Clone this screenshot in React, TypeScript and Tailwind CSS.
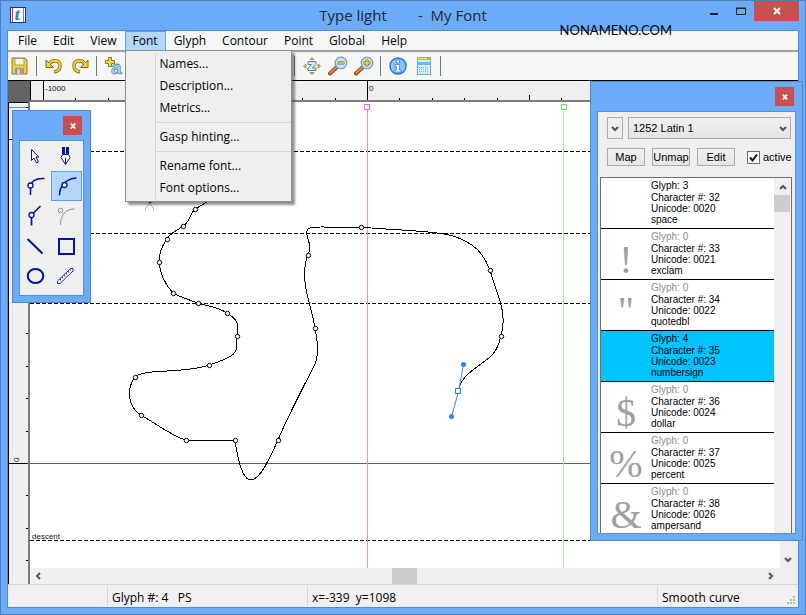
import { useState } from 'react';
import type { ReactNode } from 'react';
import clsx from 'clsx';

const NAVY = '#00149c';

const menus = ['File', 'Edit', 'View', 'Font', 'Glyph', 'Contour', 'Point', 'Global', 'Help'];

const fontMenu = [
  ['Names...', 'Description...', 'Metrics...'],
  ['Gasp hinting...'],
  ['Rename font...', 'Font options...'],
];

const glyphs = [
  { glyph: 3, char: 32, unicode: '0020', name: 'space', preview: '' },
  { glyph: 0, char: 33, unicode: '0021', name: 'exclam', preview: '!' },
  { glyph: 0, char: 34, unicode: '0022', name: 'quotedbl', preview: '"' },
  { glyph: 4, char: 35, unicode: '0023', name: 'numbersign', preview: '' },
  { glyph: 0, char: 36, unicode: '0024', name: 'dollar', preview: '$' },
  { glyph: 0, char: 37, unicode: '0025', name: 'percent', preview: '%' },
  { glyph: 0, char: 38, unicode: '0026', name: 'ampersand', preview: '&' },
];

const points = [
  [195, 209], [183, 226], [167, 239], [159, 262], [173, 293], [198, 303], [227, 313],
  [237, 336], [209, 365], [135, 377], [141, 415], [186, 440], [235, 440], [278, 440],
  [315, 328], [308, 255], [361, 227], [490, 270], [501, 336],
];

const outline =
  'M212 199L195 209C190 214 190 222 183 226C177 231 171 232 167 239C162 246 159 254 159 262' +
  'C160 273 166 285 173 293C181 297 190 300 198 303C208 306 219 307 227 313' +
  'C234 317 238 321 238 327L237 336C237 352 240 355 209 365C182 374 144 368 135 377' +
  'C127 388 127 406 141 415C152 421 174 437 186 440L235 440C239 467 244 480 251 480' +
  'C259 480 268 463 278 440C289 414 304 386 315 364C319 355 318 342 315 328' +
  'C312 308 305 292 305 280C304 268 305 262 308 255C314 243 303 235 308 229' +
  'C311 226 320 227 330 227L361 227C390 230 428 230 450 235C475 242 484 254 490 270' +
  'L501 304C504 315 504 326 501 336C499 345 496 352 490 357C477 368 463 374 459 388';

function Chevron({ dir, className }: { dir: 'up' | 'down' | 'left' | 'right'; className?: string }) {
  const paths = {
    up: 'M1 6l3-3 3 3',
    down: 'M1 3l3 3 3-3',
    left: 'M6 1l-3 3 3 3',
    right: 'M3 1l3 3-3 3',
  };
  return (
    <svg viewBox="0 0 8 8" className={clsx('h-2 w-2', className)} fill="none" stroke="#555" strokeWidth="2">
      <path d={paths[dir]} />
    </svg>
  );
}

function CloseX() {
  return (
    <svg width="8" height="8" viewBox="0 0 8 8" stroke="#fff" strokeWidth="2" fill="none">
      <path d="M1 1l6 6M7 1l-6 6" />
    </svg>
  );
}

function PaletteClose() {
  return (
    <button aria-label="Close palette" className="flex h-[19px] w-[19px] items-center justify-center bg-[#c75050]">
      <svg width="6" height="6" viewBox="0 0 6 6" stroke="#fff" strokeWidth="1.7" fill="none">
        <path d="M.8.5l4.400 5M5.200.5l-4.400 5" />
      </svg>
    </button>
  );
}

function AppIcon() {
  return (
    <svg width="16" height="16" viewBox="0 0 16 16" overflow="visible">
      <rect x=".5" y=".5" width="15" height="15" fill="#fff" stroke="#2e2a78" />
      <path d="M2.500 1v14" stroke="#d33f4c" />
      <path d="M13.500 1v14" stroke="#43a070" />
      <text x="5" y="13" fontSize="16" fontWeight="700" fontStyle="italic" fontFamily="Liberation Serif, serif" fill="#3a7cc2" stroke="#3a7cc2" strokeWidth=".5">t</text>
    </svg>
  );
}

function SaveIcon() {
  return (
    <svg width="18" height="18" viewBox="0 0 18 18">
      <path d="M1 1h13l2 2v14H1z" fill="#f6d328" stroke="#8a7a3c" />
      <rect x="4" y="1.500" width="9" height="6.500" fill="#e9f6f7" stroke="#9a8f55" strokeWidth=".8" />
      <rect x="4" y="11" width="9" height="6" fill="#8d93a0" />
      <rect x="6" y="12" width="3" height="5" fill="#c9ced6" />
      <rect x="10" y="11" width="2" height="6" fill="#e8935a" />
    </svg>
  );
}

function TurnIcon({ flip }: { flip?: boolean }) {
  return (
    <svg width="18" height="18" viewBox="0 0 18 18" fill="none">
      <g transform={flip ? 'matrix(-1 0 0 1 18 0)' : undefined}>
        <path d="M4 7.500C6 2.500 15 2 15 9c0 3.500-2.500 5.500-6 6" stroke="#7c6a2c" strokeWidth="3.400" />
        <path d="M1 3v7.500h7.500z" fill="#f6d328" stroke="#7c6a2c" />
        <path d="M4 7.500C6 2.500 15 2 15 9c0 3.500-2.500 5.200-5.500 5.800" stroke="#f6d328" strokeWidth="1.800" />
      </g>
    </svg>
  );
}

function AddGlyphIcon() {
  return (
    <svg width="18" height="18" viewBox="0 0 18 18" overflow="visible">
      <text x="6" y="17" fontSize="19" fontWeight="700" fontFamily="Liberation Sans, sans-serif" fill="#a9e2f5" stroke="#5b8fa8" strokeWidth=".8">a</text>
      <path d="M3.500.5h3v3h3v3h-3v3h-3v-3h-3v-3h3z" fill="#fbe02c" stroke="#8a7430" />
    </svg>
  );
}

function ZoomFitIcon() {
  return (
    <svg width="18" height="18" viewBox="0 0 18 18">
      <path d="M5 4.500h8v3L9.500 11H13v2.500H5V11l3.500-3.500H5z" fill="#d7ecf5" stroke="#5c7c93" />
      <path d="M9 .5l2 2H7zM9 17.500l-2-2h4zM.5 9l2.500-2v4zM17.500 9L15 11V7z" fill="#f6c928" stroke="#8a7430" strokeWidth=".7" />
    </svg>
  );
}

function LensIcon({ plus }: { plus?: boolean }) {
  return (
    <svg width="20" height="20" viewBox="0 0 20 20">
      <path d="M2 17.500L9 11" stroke="#7a4a1c" strokeWidth="4" strokeLinecap="round" />
      <path d="M2.300 17L8.500 11.300" stroke="#ee8b30" strokeWidth="2" strokeLinecap="round" />
      <circle cx="13" cy="7" r="5.800" fill="#c4e3fb" stroke="#7c9cb8" strokeWidth="1.300" />
      <path d={plus ? 'M9.500 7h7M13 3.500v7' : 'M9.500 7h7'} stroke="#75682a" strokeWidth="3" />
      <path d={plus ? 'M10 7h6M13 4v6' : 'M10 7h6'} stroke="#fbdc2c" strokeWidth="1.400" />
    </svg>
  );
}

function InfoIcon() {
  return (
    <svg width="18" height="18" viewBox="0 0 18 18">
      <circle cx="9" cy="9" r="8" fill="#8cc4f8" stroke="#1f73d8" strokeWidth="1.400" />
      <path d="M7.500 3h3v3h-3zM6 7.500h4.500V13H12v2H6v-2h1.500V9.500H6z" fill="#fff" stroke="#2a70c4" strokeWidth=".7" />
    </svg>
  );
}

function TableIcon() {
  return (
    <svg width="14" height="18" viewBox="0 0 14 18">
      <rect x=".5" y=".5" width="13" height="17" fill="#d4eefb" stroke="#7aa9c4" />
      <path d="M0 1.500h14" stroke="#d8a92c" strokeWidth="3" />
      <path d="M1 1.500h9" stroke="#ffe14a" />
      <path d="M1 6.500h12" stroke="#69b8e6" strokeWidth="3" />
      <path d="M2 10.500h10M2 12.500h10M2 14.500h10" stroke="#79b4d6" strokeDasharray="1 1" />
    </svg>
  );
}

const tools: { name: string; icon: ReactNode }[] = [
  { name: 'Select', icon: <path d="M11.500 8.500v11l2.500-2.500 2.500 5 2-1-2.500-5h3z" fill="#fff" stroke={NAVY} /> },
  {
    name: 'Pen',
    icon: (
      <>
        <path d="M11 6h3v7h-3zM15 6h3v7h-3z" fill={NAVY} />
        <path d="M11.500 13.500h6l1.500 3-4.500 7-4.500-7z" fill="#fff" stroke={NAVY} />
        <path d="M14.500 17v6" stroke={NAVY} />
      </>
    ),
  },
  {
    name: 'Tangent point',
    icon: (
      <>
        <path d="M10.500 24V15c1-5 5-8 14-7.500" fill="none" stroke={NAVY} strokeWidth="1.500" />
        <circle cx="10.500" cy="14.500" r="2.500" fill="#fff" stroke={NAVY} strokeWidth="1.300" />
      </>
    ),
  },
  {
    name: 'Smooth point',
    icon: (
      <>
        <path d="M8.500 24.500c0-9 6-17 17-17.500" fill="none" stroke={NAVY} strokeWidth="1.500" />
        <circle cx="13.500" cy="14" r="2.500" fill="#fff" stroke={NAVY} strokeWidth="1.300" />
      </>
    ),
  },
  {
    name: 'Corner point',
    icon: (
      <>
        <path d="M11.500 24.500V14l9-9" fill="none" stroke={NAVY} strokeWidth="1.700" />
        <circle cx="11.500" cy="14" r="2.500" fill="#fff" stroke={NAVY} strokeWidth="1.300" />
      </>
    ),
  },
  {
    name: 'Off-curve point',
    icon: (
      <>
        <path d="M9.500 24c0-9 4-16 14-16" fill="none" stroke="#8f8f8f" />
        <circle cx="9.500" cy="9.500" r="2.300" fill="#efefef" stroke="#8f8f8f" />
      </>
    ),
  },
  { name: 'Line', icon: <path d="M7.500 8l15 14.500" stroke={NAVY} strokeWidth="2" /> },
  { name: 'Rectangle', icon: <rect x="8" y="8" width="15" height="15" fill="none" stroke={NAVY} strokeWidth="2" /> },
  { name: 'Ellipse', icon: <ellipse cx="15.500" cy="15" rx="7.800" ry="7" fill="none" stroke={NAVY} strokeWidth="2" /> },
  {
    name: 'Measure',
    icon: (
      <>
        <path d="M6.500 20L19.500 7.500h2.500V10L9 22.500H6.500z" fill="#fff" stroke={NAVY} strokeWidth=".9" />
        <path d="M9 19l11-10.500" stroke={NAVY} strokeWidth="1.400" strokeDasharray="1 1.800" />
      </>
    ),
  },
];

function ToolButton({ label, children }: { label: string; children: ReactNode }) {
  return (
    <button aria-label={label} className="flex h-5 w-[26px] items-center justify-center">
      {children}
    </button>
  );
}

function Separator() {
  return <div className="h-5 w-px bg-[#6b7684]" />;
}

function FontMenu() {
  return (
    <div className="absolute -left-px top-full z-30 flex w-[167px] border border-[#8f9191] bg-[#efefef] py-[2px] shadow-[3px_3px_2px_rgba(60,60,60,0.55)]">
      <div className="w-[30px] border-r border-[#d5d5d5]" />
      <div className="flex-1">
        {fontMenu.map((group, i) => (
          <div key={i} className={clsx(i > 0 && 'mt-[3px] border-t border-[#d5d5d5] pt-[3px]')}>
            {group.map((item) => (
              <button key={item} className="block h-[22px] w-full pl-1 text-left leading-[22px]">
                {item}
              </button>
            ))}
          </div>
        ))}
      </div>
    </div>
  );
}

function MenuBar({ open, setOpen }: { open: string; setOpen: (name: string) => void }) {
  return (
    <nav className="flex h-[21px] border-b-2 border-[#a0a0a0] bg-[#f5f7f6] pl-[2px] text-xs">
      {menus.map((name) => (
        <div
          key={name}
          className={clsx('relative h-5 border', open === name ? 'border-[#5c9fe6] bg-[#b4d6f7]' : 'border-transparent')}
        >
          <button className="h-full px-[7px] leading-[18px]" onClick={() => setOpen(open === name ? '' : name)}>
            {name}
          </button>
          {name === 'Font' && open === name && <FontMenu />}
        </div>
      ))}
    </nav>
  );
}

function Toolbar() {
  return (
    <div className="flex h-[28px] items-center bg-[#f5f7f6]">
      <div className="flex w-7 items-center pl-[3px]">
        <button aria-label="Save"><SaveIcon /></button>
      </div>
      <Separator />
      <div className="flex w-[59px] justify-center">
        <ToolButton label="Undo"><TurnIcon /></ToolButton>
        <ToolButton label="Redo"><TurnIcon flip /></ToolButton>
      </div>
      <Separator />
      <div className="w-[197px] pl-1">
        <ToolButton label="Add glyph"><AddGlyphIcon /></ToolButton>
      </div>
      <Separator />
      <div className="flex w-[85px] pl-1">
        <ToolButton label="Zoom to fit"><ZoomFitIcon /></ToolButton>
        <ToolButton label="Zoom out"><LensIcon /></ToolButton>
        <ToolButton label="Zoom in"><LensIcon plus /></ToolButton>
      </div>
      <Separator />
      <div className="flex w-[59px] pl-1">
        <ToolButton label="Information"><InfoIcon /></ToolButton>
        <ToolButton label="Character table"><TableIcon /></ToolButton>
      </div>
      <Separator />
    </div>
  );
}

function TopRuler() {
  const ticks = Array.from({ length: 22 }, (_, i) => i + 1).filter((i) => i !== 10);
  return (
    <div className="flex h-[22px] border-t border-black">
      <div className="w-[22px] bg-[#646464]" />
      <svg className="h-[21px] min-w-0 flex-1 bg-[#efefef]" shapeRendering="crispEdges">
        <path d="M.5 0v21M13.500 0v19M337.500 0v19" stroke="#000" />
        {ticks.map((i) => {
          const x = Math.round(13 + i * 32.4) + 0.5;
          return <path key={i} d={i % 5 === 0 ? `M${x} 14v5` : `M${x} 17v2`} stroke="#000" />;
        })}
        <text x="15" y="10" fontSize="8" fill="#111">-1000</text>
        <text x="339" y="10" fontSize="8" fill="#111">0</text>
        <rect x="0" y="19" width="100%" height="2" fill="#7c7c7c" />
      </svg>
    </div>
  );
}

function SideRuler() {
  const ticks = Array.from({ length: 14 }, (_, i) => i).filter((i) => i !== 11 && i !== 1);
  return (
    <svg className="w-[22px] bg-[#efefef]" shapeRendering="crispEdges">
      <path d="M0 .5h20M.5 0v600" stroke="#000" />
      <path d="M1 5.500h20" stroke="#4d90da" />
      <path d="M0 37.500h20M0 361.500h20" stroke="#000" />
      {ticks.map((i) => {
        const y = Math.round(361 + (i - 11) * 32.4) + 0.5;
        return <path key={i} d={`M18 ${y}h3`} stroke="#000" />;
      })}
      <path d="M18 458.500h3" stroke="#000" />
      <text transform="translate(11 360) rotate(-90)" fontSize="8" fill="#111">0</text>
      <rect x="20" y="0" width="2" height="100%" fill="#7c7c7c" />
    </svg>
  );
}

function Drawing() {
  return (
    <svg className="h-full w-full bg-white">
      <g shapeRendering="crispEdges">
        <g stroke="#000" strokeDasharray="4 2">
          <line x1="0" x2="100%" y1="49.500" y2="49.500" />
          <line x1="0" x2="100%" y1="131.500" y2="131.500" />
          <line x1="0" x2="100%" y1="201.500" y2="201.500" />
          <line x1="0" x2="100%" y1="438.500" y2="438.500" />
        </g>
        <line x1="0" x2="100%" y1="361.500" y2="361.500" stroke="#606060" />
        <line x1="337.500" x2="337.500" y1="8" y2="100%" stroke="#f582f0" />
        <line x1="533.500" x2="533.500" y1="8" y2="100%" stroke="#90f590" />
      </g>
      <text x="2" y="437" fontSize="8" fill="#111">descent</text>
      <g transform="translate(-29.500 -101.500)" fill="none">
        <rect x="364" y="104" width="5" height="5" fill="#fff" stroke="#f564f0" />
        <rect x="561" y="104" width="5" height="5" fill="#fff" stroke="#66e866" />
        <path d="M148 202h3" stroke="#000" />
        <path d="M145 210v-2l4-5 4 5v2" stroke="#b4b4a4" />
        <path d={outline} transform="translate(-.6 -.4)" stroke="#000" shapeRendering="crispEdges" />
        {points.map(([x, y]) => (
          <circle key={`${x}-${y}`} cx={x} cy={y} r="2.200" fill="#fff" stroke="#000" />
        ))}
        <path d="M463 364l-5 27-7 25" stroke="#2f86e8" />
        <circle cx="463" cy="364" r="2.500" fill="#2f86e8" />
        <circle cx="451" cy="416" r="2.500" fill="#2f86e8" />
        <rect x="455" y="388" width="5" height="5" fill="#fff" stroke="#2f86e8" />
      </g>
    </svg>
  );
}

function Workspace() {
  return (
    <div className="flex min-h-0 flex-1">
      <SideRuler />
      <div className="flex min-w-0 flex-1 flex-col bg-[#efefef]">
        <div className="flex min-h-0 flex-1">
          <div className="min-w-0 flex-1">
            <Drawing />
          </div>
          <div className="flex w-[18px] flex-col justify-end pr-[2px]">
            <button aria-label="Scroll down" className="flex h-[19px] items-center justify-center">
              <Chevron dir="down" />
            </button>
          </div>
        </div>
        <div className="mr-5 flex h-4">
          <button aria-label="Scroll left" className="flex w-4 items-center justify-center">
            <Chevron dir="left" />
          </button>
          <div className="flex flex-1 justify-center">
            <div className="w-[25px] bg-[#cdcdcd]" />
          </div>
          <button aria-label="Scroll right" className="flex w-4 items-center justify-center">
            <Chevron dir="right" />
          </button>
        </div>
      </div>
    </div>
  );
}

function StatusBar() {
  return (
    <footer className="relative flex h-[23px] items-stretch border-t border-[#d7d7d7] bg-[#f0f0f0] text-xs leading-[23px]">
      <div className="my-px w-[100px] border-r border-[#d7d7d7]" />
      <div className="my-px w-[200px] whitespace-pre border-r border-[#d7d7d7] pl-1">{'Glyph #: 4   PS'}</div>
      <div className="my-px flex-1 whitespace-pre border-r border-[#d7d7d7] pl-1">{'x=-339  y=1098'}</div>
      <div className="my-px w-[140px] pl-1">Smooth curve</div>
      <svg width="9" height="9" viewBox="0 0 9 9" className="absolute bottom-[2px] right-[2px]" fill="#b9b9b0">
        <path d="M6 0h2v2H6zM3 3h2v2H3zM6 3h2v2H6zM0 6h2v2H0zM3 6h2v2H3zM6 6h2v2H6z" />
      </svg>
    </footer>
  );
}

function ToolPalette() {
  const [active, setActive] = useState('Smooth point');
  return (
    <aside className="absolute left-[11px] top-[109px] z-10 w-[79px] border border-[#5088c8] bg-[#6babf7] px-[6px] pb-[6px]">
      <div className="flex h-[29px] items-center justify-end pr-[2px]">
        <PaletteClose />
      </div>
      <div className="grid grid-cols-2 border border-[#5290da] bg-[#efefef] pb-1 pr-px">
        {tools.map(({ name, icon }) => (
          <button
            key={name}
            aria-label={name}
            onClick={() => setActive(name)}
            className={clsx('h-[30px] border', active === name ? 'border-[#5c9fe6] bg-[#b4d6f7]' : 'border-transparent')}
          >
            <svg className="-m-px block h-[30px] w-[31px]" viewBox="0 0 31 30">
              {icon}
            </svg>
          </button>
        ))}
      </div>
    </aside>
  );
}

function CharacterPalette() {
  const [active, setActive] = useState(true);
  const [selected, setSelected] = useState(35);
  return (
    <aside className="absolute bottom-[73px] right-[2px] top-[80px] z-20 flex w-[213px] flex-col border border-[#5088c8] bg-[#6babf7] px-[6px] pb-[6px] font-['Liberation_Sans',sans-serif] text-[11px]">
      <div className="flex h-[29px] shrink-0 items-center justify-end pr-[2px]">
        <PaletteClose />
      </div>
      <div className="flex min-h-0 flex-1 flex-col border border-[#5290da] bg-[#efefef] pt-[5px]">
        <div className="flex gap-[5px] pl-[9px] pr-1">
          <button aria-label="Code page list" className="flex h-[22px] w-4 shrink-0 items-center justify-center border border-[#acacac]">
            <Chevron dir="down" />
          </button>
          <div className="relative flex-1">
            <select
              aria-label="Code page"
              className="block h-[22px] w-full appearance-none border border-[#acacac] bg-linear-to-b from-[#f0f0f0] to-[#e4e4e4] pl-1"
            >
              <option>1252 Latin 1</option>
            </select>
            <Chevron dir="down" className="pointer-events-none absolute right-1 top-[7px]" />
          </div>
        </div>
        <div className="mt-[9px] flex items-center gap-[7px] pl-[9px]">
          {['Map', 'Unmap', 'Edit'].map((label) => (
            <button key={label} className="h-[18px] w-[38px] border border-[#acacac] bg-linear-to-b from-[#f0f0f0] to-[#e6e6e6] leading-4">
              {label}
            </button>
          ))}
          <label className="relative ml-[5px] flex items-center gap-[3px]">
            <input
              type="checkbox"
              checked={active}
              onChange={(e) => setActive(e.target.checked)}
              className="h-[13px] w-[13px] appearance-none border border-[#707070] bg-white"
            />
            {active && (
              <svg viewBox="0 0 13 13" className="pointer-events-none absolute left-0 h-[13px] w-[13px]" fill="none" stroke="#111" strokeWidth="2">
                <path d="M3 6.500l2.500 3 4.500-6" />
              </svg>
            )}
            active
          </label>
        </div>
        <div className="ml-[2px] mr-[3px] mt-[11px] flex min-h-0 flex-1 overflow-hidden border border-b-0 border-[#6e6e6e] bg-[#efefef]">
          <ul className="flex-1">
            {glyphs.map((g) => (
              <li
                key={g.char}
                onClick={() => setSelected(g.char)}
                className={clsx(
                  'flex h-[51px] border-b border-black text-[10px] leading-[11px]',
                  selected === g.char ? 'bg-[#00c4ff]' : 'bg-white',
                )}
              >
                <div className="w-[50px] pt-3 text-center font-['Liberation_Serif',serif] text-[40px] leading-[38px] text-[#a0a0a0]">
                  {g.preview}
                </div>
                <div className="pt-[2px]">
                  <div className={clsx('mb-px', g.glyph === 0 && 'text-[#8c8c8c]')}>Glyph: {g.glyph}</div>
                  <div>Character #: {g.char}</div>
                  <div>Unicode: {g.unicode}</div>
                  <div>{g.name}</div>
                </div>
              </li>
            ))}
          </ul>
          <div className="w-[17px]">
            <button aria-label="Scroll up" className="flex h-[17px] w-full items-center justify-center">
              <Chevron dir="up" />
            </button>
            <div className="mr-px h-[17px] bg-[#cdcdcd]" />
          </div>
        </div>
      </div>
    </aside>
  );
}

export default function App() {
  const [open, setOpen] = useState('Font');
  return (
    <div className="relative flex h-screen flex-col overflow-hidden border border-[#4d80bd] bg-[#6babf7] px-[6px] pb-[6px] font-['Open_Sans',sans-serif] text-black">
      <header className="grid h-[29px] grid-cols-[1fr_auto_1fr]">
        <div className="pl-[3px] pt-[6px]">
          <AppIcon />
        </div>
        <h1 className="whitespace-pre text-[15px] leading-[29px] text-[#1c2836]">{'Type light        -  My Font'}</h1>
        <div className="flex justify-end">
          <button aria-label="Minimize" className="h-5 w-[26px]">
            <svg width="26" height="20" viewBox="0 0 26 20">
              <path d="M8 13h8" stroke="#222" strokeWidth="2" />
            </svg>
          </button>
          <button aria-label="Maximize" className="h-5 w-[26px]">
            <svg width="26" height="20" viewBox="0 0 26 20" fill="none" stroke="#222">
              <path d="M8.500 7.500h9v6h-9zM8 7h10" />
            </svg>
          </button>
          <button aria-label="Close" className="flex h-5 w-[45px] items-center justify-center bg-[#c75050]">
            <CloseX />
          </button>
        </div>
      </header>
      <div className="flex min-h-0 flex-1 flex-col border border-[#4f8bd2]">
        <MenuBar open={open} setOpen={setOpen} />
        <Toolbar />
        <div className="flex min-h-0 flex-1 flex-col font-['Liberation_Sans',sans-serif]">
          <TopRuler />
          <Workspace />
        </div>
        <StatusBar />
      </div>
      <div className="absolute right-[133px] top-5 font-['Lato',sans-serif] text-[13px] leading-[18px]">NONAMENO.COM</div>
      <ToolPalette />
      <CharacterPalette />
    </div>
  );
}
